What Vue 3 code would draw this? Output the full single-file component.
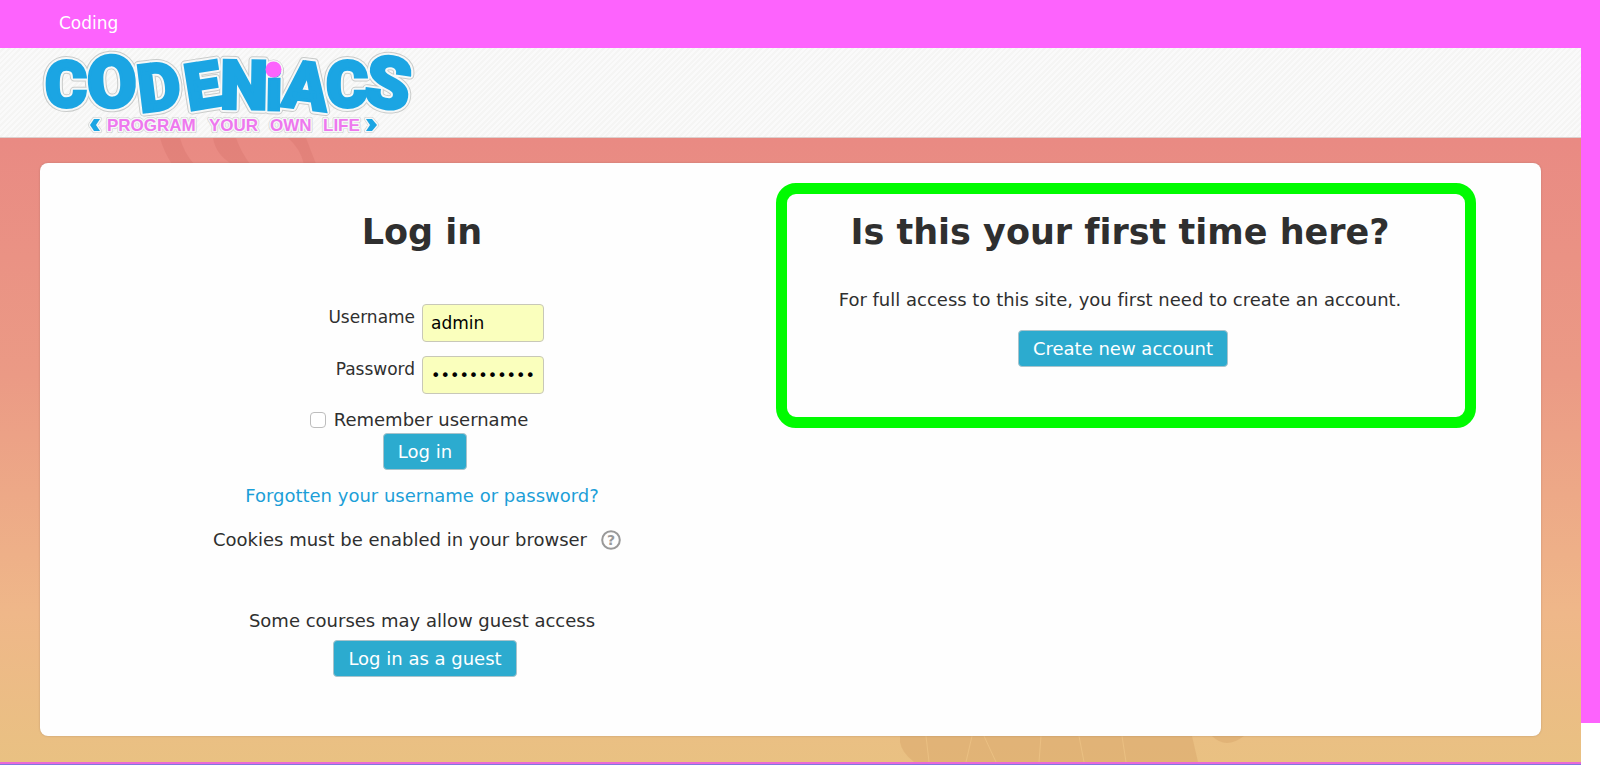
<script setup>
import { ref } from 'vue'

const username = ref('admin')
const password = ref('codeniacs12')
const remember = ref(false)

const letters = [
  { ch: 'C', x: 66, y: 107, size: 64, turn: 0 },
  { ch: 'O', x: 112, y: 107, size: 72, turn: -4 },
  { ch: 'D', x: 159, y: 110, size: 66, turn: -7 },
  { ch: 'E', x: 203, y: 108, size: 64, turn: -9 },
  { ch: 'N', x: 244, y: 109, size: 68, turn: 1 },
  { ch: 'i', x: 274, y: 110, size: 58, turn: 1 },
  { ch: 'A', x: 306, y: 109, size: 66, turn: 7 },
  { ch: 'C', x: 347, y: 107, size: 64, turn: 0 },
  { ch: 'S', x: 388, y: 108, size: 72, turn: 8 }
]
const words = [
  { text: 'PROGRAM', x: 107 },
  { text: 'YOUR', x: 209 },
  { text: 'OWN', x: 270 },
  { text: 'LIFE', x: 323 }
]
const layers = ['shade', 'halo', 'fill']
</script>

<template>
  <div class="site">
    <nav class="topbar"><a href="#">Coding</a></nav>
    <div class="body-row">
      <div class="main">
        <header class="banner">
          <svg class="logo" viewBox="40 48 376 88" role="img" aria-label="Codeniacs, program your own life">
            <g v-for="layer in layers" :key="layer" :class="layer">
              <g class="name">
                <text
                  v-for="(l, i) in letters"
                  :key="i"
                  :x="l.x"
                  :y="l.y"
                  :font-size="l.size"
                  :transform="`rotate(${l.turn} ${l.x} ${l.y - 22})`"
                >{{ l.ch }}</text>
              </g>
              <circle class="dot" cx="273.5" cy="69.5" r="8" />
              <g class="tagline">
                <text v-for="w in words" :key="w.text" :x="w.x" y="131">{{ w.text }}</text>
              </g>
              <path class="chevron" d="M94 119h6l-4 6 4 6h-6l-4-6z" />
              <path class="chevron" d="M372 119h-6l4 6-4 6h6l5-6z" />
            </g>
          </svg>
        </header>

        <main class="backdrop">
          <svg class="swirls top" viewBox="0 0 200 26" aria-hidden="true">
            <path d="M0 0h20q4 15 14 26H12Q4 14 0 0z" />
            <path d="M53 0h23q5 14 14 26H72Q56 17 53 0z" />
            <path d="M128 0h18l10 26h-12q-4-16-16-26z" />
          </svg>
          <svg class="swirls bottom" viewBox="0 0 360 26" aria-hidden="true">
            <path d="M0 0h292l6 26H14Q-2 14 0 0z" />
            <path d="M312 0h32q-18 14-32 0z" />
            <path class="streak" d="M26 0l3 26M72 0l-6 26M84 0l12 26M141 0l-2 26M179 0l5 26M222 0l4 26" />
          </svg>

          <div class="card">
            <section class="panel login">
              <h2>Log in</h2>
              <form @submit.prevent>
                <div class="field">
                  <label for="username">Username</label>
                  <input id="username" v-model="username" type="text" />
                </div>
                <div class="field">
                  <label for="password">Password</label>
                  <input id="password" v-model="password" type="password" />
                </div>
                <div class="remember">
                  <input id="remember" v-model="remember" type="checkbox" />
                  <label for="remember">Remember username</label>
                </div>
                <button class="btn" type="submit">Log in</button>
              </form>
              <a class="forgot" href="#">Forgotten your username or password?</a>
              <div class="cookies">
                <span>Cookies must be enabled in your browser</span>
                <button class="help" type="button" aria-label="Help with cookies">
                  <svg viewBox="0 0 20 20" aria-hidden="true">
                    <circle cx="10" cy="10" r="8.8" />
                    <text x="10" y="15">?</text>
                  </svg>
                </button>
              </div>
              <p class="guest">Some courses may allow guest access</p>
              <button class="btn guest-btn" type="button">Log in as a guest</button>
            </section>

            <section class="panel signup">
              <h2>Is this your first time here?</h2>
              <p>For full access to this site, you first need to create an account.</p>
              <button class="btn" type="button">Create new account</button>
            </section>
          </div>
        </main>
      </div>
      <div class="edge"></div>
    </div>
  </div>
</template>

<style>
body {
  margin: 0;
  background: #fff;
}
</style>

<style scoped>
.site {
  font-family: "DejaVu Sans", sans-serif;
  font-size: 18px;
  font-variant-ligatures: none;
  line-height: 24px;
  color: #2f2f2f;
}
.topbar {
  background: #fd63fd;
  padding: 11px 59px 13px;
  font-size: 17px;
}
.topbar a {
  color: #fff;
  text-decoration: none;
}
.body-row {
  display: flex;
}
.main {
  flex: 1;
  min-width: 0;
  border-bottom: 1px solid #8078e0;
}
.edge {
  width: 19px;
  margin-bottom: 42px;
  background: #fd63fd;
}
.banner {
  padding: 0 40px 1px;
  border-bottom: 1px solid #dcd0ce;
  background: repeating-linear-gradient(135deg, #fafafa 0 2px, #f5f5f4 2px 4px);
}
.logo {
  display: block;
  width: 376px;
  height: 88px;
  overflow: visible;
}
.name text {
  font-family: Roboto, sans-serif;
  font-weight: 900;
  text-anchor: middle;
}
.tagline text {
  font-family: "Liberation Sans", Arial, sans-serif;
  font-weight: 700;
  font-size: 17px;
}
.shade,
.halo {
  stroke-linejoin: round;
}
.shade {
  fill: #c9cbca;
  stroke: #c9cbca;
  stroke-width: 4px;
}
.shade .name {
  stroke-width: 9px;
}
.halo {
  fill: #f6f8f8;
  stroke: #f6f8f8;
  stroke-width: 3px;
}
.halo .name {
  stroke-width: 7px;
}
.fill .name {
  fill: #1ba5e3;
  stroke: #1ba5e3;
  stroke-width: 3px;
}
.fill .chevron {
  fill: #1ba5e3;
}
.fill .dot {
  fill: #fd63fd;
}
.fill .tagline {
  fill: #ee78ee;
}
.backdrop {
  position: relative;
  padding: 25px 40px 26px;
  border-bottom: 2px solid #e86ad8;
  background: linear-gradient(#e98a83, #eb9a85 38%, #efb789 76%, #e9c182);
}
.swirls {
  position: absolute;
  fill: #d9766f;
  opacity: 0.4;
}
.swirls.top {
  top: 0;
  left: 160px;
  width: 200px;
  height: 26px;
}
.swirls.bottom {
  bottom: 0;
  left: 900px;
  width: 360px;
  height: 26px;
  fill: #d6a266;
}
.streak {
  fill: none;
  stroke: #ecc083;
  stroke-width: 1px;
}
.card {
  position: relative;
  display: grid;
  grid-template-columns: 1fr 1fr;
  align-items: start;
  padding: 20px 65px 59px 36px;
  border-radius: 8px;
  background: #fefefe;
  box-shadow: 0 0 2px rgba(120, 90, 80, 0.4);
}
.panel {
  display: flex;
  flex-direction: column;
  align-items: center;
}
.login {
  padding: 31px 8px 0 0;
}
.signup {
  border: 11px solid #00fb00;
  border-radius: 20px;
  padding: 20px 12px 50px 0;
}
h2 {
  margin: 0;
  font-size: 35px;
  line-height: 36px;
  font-weight: 700;
}
p {
  margin: 0;
}
.signup p {
  margin: 38px 0 18px;
}
form {
  display: flex;
  flex-direction: column;
  align-items: center;
  align-self: stretch;
  margin-top: 54px;
}
.field {
  display: grid;
  grid-template-columns: 49% 122px;
  column-gap: 7px;
  align-self: stretch;
  margin-bottom: 14px;
}
.field label {
  font-size: 17px;
  line-height: 26px;
  text-align: right;
}
.field input {
  box-sizing: border-box;
  width: 100%;
  height: 38px;
  padding: 0 8px;
  border: 1px solid #c8c8b8;
  border-radius: 4px;
  background: #faffbd;
  color: #000;
  font: inherit;
  font-size: 17px;
}
.field input[type="password"] {
  font-size: 16px;
}
.remember {
  display: flex;
  align-items: center;
  gap: 8px;
  margin-right: 6px;
}
.remember input {
  appearance: none;
  width: 16px;
  height: 16px;
  margin: 0;
  border: 1px solid #bdbdbd;
  border-radius: 4px;
  background: #fff;
}
.btn {
  margin: 1px 0 0 6px;
  height: 37px;
  padding: 0 14px;
  border: 1px solid #a9c3cb;
  border-radius: 4px;
  background: #2cabcf;
  color: #fff;
  font: inherit;
}
.signup .btn {
  margin-top: 0;
}
.forgot {
  margin-top: 14px;
  color: #1c9fd8;
  text-decoration: none;
}
.cookies {
  display: flex;
  align-items: center;
  gap: 14px;
  margin: 20px 10px 0 0;
}
.help {
  width: 20px;
  height: 20px;
  padding: 0;
  border: 0;
  background: none;
}
.help svg {
  display: block;
}
.help circle {
  fill: none;
  stroke: #999;
  stroke-width: 2px;
}
.help text {
  fill: #999;
  font: 700 14px "DejaVu Sans", sans-serif;
  text-anchor: middle;
}
.guest {
  margin-top: 57px;
}
.login .guest-btn {
  margin-top: 7px;
}
</style>
